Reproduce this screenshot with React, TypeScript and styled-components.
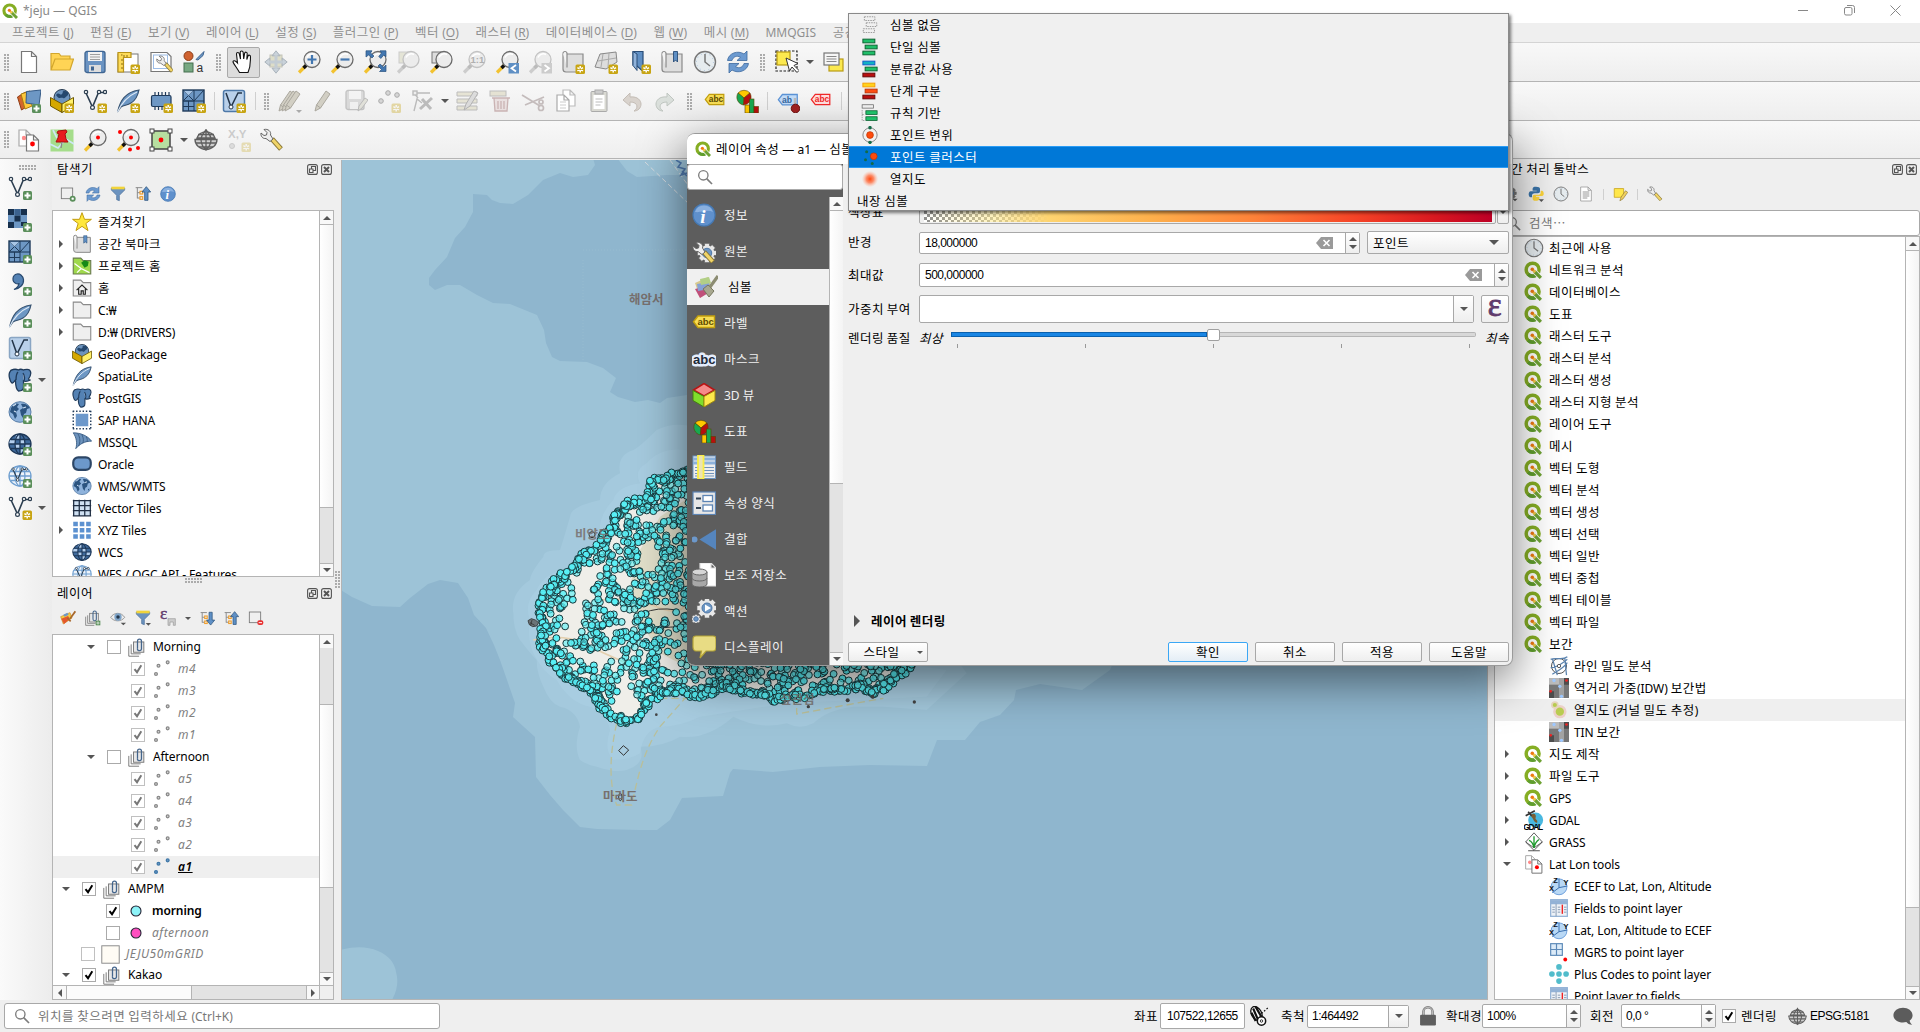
import React from 'react';
import styled, { createGlobalStyle, css } from 'styled-components';

const Global = createGlobalStyle`
  html, body { margin: 0; padding: 0; overflow: hidden; background: #efefef; }
  * { box-sizing: border-box; }
  svg { display: block; flex: none; }
`;

/* ---------- text ---------- */
const Run = styled.span`white-space: pre;`;
const Ko = styled.span`
  font-family: "Noto Sans CJK KR", sans-serif;
  font-size: 1.042em;
  letter-spacing: 0.5px;
`;
const Txt = ({ t }: { t: string }) => (
  <Run>
    {t.split(/([가-힣…]+)/).map((p, i) => (/[가-힣…]/.test(p) ? <Ko key={i}>{p}</Ko> : p))}
  </Run>
);

/* ---------- icons ---------- */
const B = '#6d97c4';
const D = '#1f3a5a';
type IP = { s?: number };
const I = ({ s = 24, children }: { s?: number; children: React.ReactNode }) => (
  <svg width={s} height={s} viewBox="0 0 24 24" fill="none">{children}</svg>
);
const Star = () => (
  <g>
    <rect x="14.5" y="14.5" width="9.5" height="9.5" rx="1.5" fill="#c8a514" />
    <path d="M19.2 16v6.4M16.4 17.6l5.6 3.2M22 17.6l-5.6 3.2" stroke="#fff" strokeWidth="1.5" />
    <circle cx="19.2" cy="19.2" r="1" fill="#c8a514" />
  </g>
);
const Plus = () => (
  <g>
    <rect x="15" y="15" width="9" height="9" rx="1.5" fill="#5b8f5b" />
    <path d="M19.5 16.5v6M16.5 19.5h6" stroke="#fff" strokeWidth="2" />
  </g>
);
const Lens = ({ dim }: { dim?: boolean }) => (
  <g>
    <path d="M9 15.5L2 22.5" stroke={dim ? '#ccc' : '#f2c230'} strokeWidth="3.2" />
    <path d="M9.5 15L6.5 18" stroke={dim ? '#bbb' : '#111'} strokeWidth="3.4" />
    <circle cx="15" cy="9.5" r="8" fill="#ececec" stroke={dim ? '#c2c2c2' : '#6a6a6a'} strokeWidth="1.3" />
    <path d="M10 7.5a5.6 5.6 0 0 1 8-3" stroke="#fff" strokeWidth="1.6" />
  </g>
);
const VShape = () => (
  <g stroke="#2c3e50" strokeWidth="1.2">
    <path d="M3 4L9.5 18 15.5 3.5H22" strokeWidth="1.6" />
    <circle cx="3" cy="3" r="1.7" fill="#fff" /><circle cx="9.5" cy="18.5" r="1.9" fill="#fff" />
    <circle cx="16" cy="3" r="1.7" fill="#fff" /><circle cx="22" cy="3" r="1.6" fill="#fff" />
  </g>
);
const Feather = () => (
  <g>
    <path d="M1.5 23C4 12 9 3 23 1 22 6 20 11 15 14c-4 2.5-7 2-10 4z" fill={B} stroke="#35506e" strokeWidth="1.1" />
    <path d="M1.5 23C6 13 12 7 21 3" stroke="#dce8f5" strokeWidth="1.2" />
  </g>
);
const Mesh = () => (
  <g>
    <rect x="1" y="1" width="21" height="21" fill={B} stroke={D} strokeWidth="1.4" />
    <path d="M1 12h21M12 1v21M12 12L22 1M1 1l11 11L1 12 12 1M1 17.5h11M6.5 12v10" stroke={D} strokeWidth="1" />
    <path d="M2 2l4.5 4.5L11 2z" fill="#a9c6e6" />
  </g>
);
const Box3 = () => (
  <g>
    <circle cx="12" cy="8.5" r="8" fill="#6c93bd" stroke="#24384e" />
    <path d="M6 6c3-4 4 1 6-1s-1-3 3-3 4 4 2 5-2 3-4 2-4 2-7-3z" fill="#24476e" />
    <path d="M.5 8.5L12 15v8.5L.5 17z" fill="#d5a800" stroke="#6d5800" />
    <path d="M23.5 8.5L12 15v8.5L23.5 17z" fill="#fff06a" stroke="#6d5800" />
  </g>
);
const Globe = ({ c = '#4b7bb0', dark = false }: { c?: string; dark?: boolean }) => (
  <g stroke={dark ? '#1e3858' : c} strokeWidth="1.3">
    <ellipse cx="12" cy="12" rx="11" ry="10" fill={dark ? '#3f6a9c' : '#edf3fa'} />
    {dark && <path d="M2 8h5v4H1zM12 8h5v4h-5zM7 12h5v4H7zM17 12h5l-1 4h-4zM8 3h4v5H7zM12 16h5l-2 5h-3z" fill="#b4cfee" stroke="none" />}
    <ellipse cx="12" cy="12" rx="5" ry="10" /><path d="M1 12h22M2.5 7.5h19M2.5 16.5h19M12 2v20" />
  </g>
);
const Earth = () => (
  <g>
    <ellipse cx="12" cy="12" rx="11" ry="10.3" fill="#8fb3dc" stroke="#5a7fa8" />
    <path d="M3 8c3-5 6-5 8-4l-2 3 2 2-3 3 1 4-2 3-2-5-3-2zM13 4c4-1 7 1 9 4l-3 1-1 4-2 1-1 4-2-3-1-5 3-2zM19 16l2-1-1 3z" fill="#2c5480" />
    <path d="M5 6l3-2M15 8l3-1M6 11l2 1" stroke="#cfe0f2" strokeWidth="1.2" />
  </g>
);
const Eleph = () => (
  <path d="M5 1.5C1.5 2 .5 6 1.5 10c1 4 2 5 3 5s2-2 3-3c0 4 0 9 3 11 3 0 5-1 5-4v-6c3 1 5 0 7-1-1 0-2 0-2-1 2-3 3-7 1-9-2-1.500-4-.5-6 0-2-1-4-.8-5 0C9 1.300 7 1 5 1.500zM10 4c-2 2-2 5-2 8M15 5c2 3 2 5 1 8" fill="#5482b4" stroke="#1f3a5a" strokeWidth="1.3" />
);
const Gear = ({ x, y, r, c = '#e8e8e8', o = '#6a6a6a' }: { x: number; y: number; r: number; c?: string; o?: string }) => (
  <g>
    {[0, 45, 90, 135].map(a => <rect key={a} x={x - r} y={y - r * 0.24} width={r * 2} height={r * 0.48} fill={c} stroke={o} strokeWidth=".6" transform={`rotate(${a} ${x} ${y})`} />)}
    <circle cx={x} cy={y} r={r * 0.78} fill={c} />
    <circle cx={x} cy={y} r={r * 0.5} fill={B} stroke="#4d76a6" />
  </g>
);
const WrenchG = () => (
  <g>
    <path d="M12 11l9 10" stroke="#8a7838" strokeWidth="5" /><path d="M12.500 11.500l8 9" stroke="#f0d468" strokeWidth="3.200" />
    <path d="M4 1.500l3 3-.5 2.500-2.500.5-3-2.500C.5 8 2.500 11 6 10.500l4 3 3-2.500-2.500-4C11.500 3.500 8 .5 4 1.500z" fill="#eee" stroke="#666" />
  </g>
);
const Arrows = ({ c, o }: { c: string; o: string }) => (
  <path d="M12 .8l4 4.700h-2.600V9h4V6.500l5 5.500-5 5.500V15h-4v3.500H16l-4 4.700-4-4.700h2.600V15h-4v2.500L1.600 12l5-5.500V9h4V5.500H8z" fill={c} stroke={o} />
);
const Refresh = () => (
  <g fill="#6c9ad0" stroke="#3d6a9e" strokeWidth=".8">
    <path d="M1.500 10.500C2.500 3 12 0 18 4l3-3v9.500h-10l3.500-3.200C10.500 5 7 7 6 10.500z" />
    <path d="M22.500 13.500c-1 7.500-10.500 10.500-16.500 6.500l-3 3v-9.500h10l-3.500 3.200c4 2.300 7.500.300 8.500-3.200z" />
  </g>
);
const Clock = () => (
  <g>
    <circle cx="12" cy="12" r="10.500" fill="#e6ecef" stroke="#777" strokeWidth="1.400" />
    <path d="M12 4v8l5 4" stroke="#777" strokeWidth="1.500" />
    <circle cx="12" cy="12" r="8.500" stroke="#a9bfd8" strokeWidth="1" strokeDasharray="1 3.450" />
  </g>
);
const Book = () => (
  <g>
    <path d="M2 3.500V19a3 3 0 0 0 3 3h17V4H5" fill="#dedede" stroke="#8a8a8a" strokeWidth="1.200" />
    <path d="M2 3.500a2 2 0 0 1 4 0v14" fill="#f4f4f4" stroke="#8a8a8a" strokeWidth="1.200" />
  </g>
);
const Abc = ({ bg, bd, tx, t = 'abc' }: { bg: string; bd: string; tx: string; t?: string }) => (
  <g>
    <path d="M6 5H22.500v11.500H6L1.500 10.750z" fill={bg} stroke={bd} strokeWidth="1.400" />
    <text x="5.500" y="14" fontSize="9.500" fontWeight="700" fill={tx} fontFamily="Liberation Sans">{t}</text>
  </g>
);
const Diagram = () => (
  <g stroke="#5b4300" strokeWidth=".6">
    <path d="M9 9L3 4a8 8 0 0 1 12 0z" fill="#ffc800" /><path d="M9 9L3 4a8 8 0 0 0 5.500 12z" fill="#18a851" /><path d="M9 9l6-5a8 8 0 0 1-6.500 12z" fill="#b80f0f" />
    <rect x="10" y="16" width="4.500" height="8" fill="#ffc800" /><rect x="14.500" y="10" width="4.500" height="14" fill="#18a851" /><rect x="19" y="17.500" width="4.500" height="6.500" fill="#b80f0f" />
  </g>
);
const Pencil = ({ x = 0 }: { x?: number }) => (
  <path d={`M${4 + x} 22l1.500-6L${15 + x} 2l4 3L${9.500 + x} 19zM${5.500 + x} 16l4 3`} fill="#d2cfc4" stroke="#aba89f" />
);
const Stack2 = () => (
  <g stroke="#777" strokeWidth="1.200">
    <path d="M1 10v13h13M4 8v12h12" /><rect x="7" y="5" width="13" height="13" fill="#e8e8e8" />
    <path d="M12 13V4a2 2 0 0 1 5 0v10a2.500 2.500 0 0 1-5-1" stroke="#44658c" strokeWidth="1.600" />
  </g>
);
const Tree = ({ up }: { up?: boolean }) => (
  <g>
    <path d="M1 2.500h10M3.500 2.500v16M3.500 10h4M3.500 18h4" stroke="#8a8a8a" strokeWidth="1.500" />
    <rect x="7.500" y="8" width="4" height="4" stroke="#f0a030" strokeWidth="1.800" /><rect x="7.500" y="16" width="4" height="4" stroke="#f0a030" strokeWidth="1.800" />
    <path d={up ? 'M17 1l6.500 8h-4v12.500h-5V9h-4z' : 'M17 22.500l6.500-8h-4V2h-5v12.500h-4z'} fill="#5f90c6" stroke="#2f567f" strokeWidth="1.200" />
  </g>
);
const Folder = ({ c = '#efefef', o = '#8a8a8a' }: { c?: string; o?: string }) => (
  <path d="M1.500 21.500v-19h9l3 3h9v16z" fill={c} stroke={o} strokeWidth="1.300" />
);
const Page = ({ x = 0, y = 0, w = 14, h = 19, o = '#777' }: { x?: number; y?: number; w?: number; h?: number; o?: string }) => (
  <path d={`M${x} ${y}h${w - 5}l5 5v${h - 5}H${x}zM${x + w - 5} ${y}v5h5`} fill="#fff" stroke={o} strokeWidth="1.200" />
);
const Bars = ({ c, o }: { c: string[]; o: string[] }) => (
  <g strokeWidth="1.200">
    <rect x="2.500" y="1.500" width="16" height="5" fill={c[0]} stroke={o[0]} /><rect x="5.500" y="9.500" width="16" height="5" fill={c[1]} stroke={o[1]} /><rect x="2.500" y="17.500" width="16" height="5" fill={c[2]} stroke={o[2]} />
  </g>
);

const ic: Record<string, React.ReactNode> = {
  q: <g>
    <circle cx="11.500" cy="11.500" r="8.600" stroke="#86ae24" strokeWidth="4.600" />
    <path d="M5.500 17.600a8.600 8.600 0 0 0 10 1.600" stroke="#5f9e2e" strokeWidth="4.600" />
    <path d="M12 12l10.500 10.500" stroke="#fff" strokeWidth="6.500" /><path d="M14 14l8.500 8.500" stroke="#6ea233" strokeWidth="4.400" />
    <path d="M10.500 10.500l4.500 4.500" stroke="#f3c64a" strokeWidth="3.600" /><circle cx="11" cy="11" r="2.300" fill="#ee7913" />
  </g>,
  new: <Page x={4.500} y={1.500} w={15} h={21} />,
  open: <path d="M1 20V3.500h8l2 2.500h9v3h3.500L20 20z M1 20L5 9h15" fill="#ffd455" stroke="#d2a62d" strokeWidth="1.200" />,
  save: <g><rect x="2" y="1.500" width="20" height="21" rx="2" fill="#6a93c2" stroke="#3f6591" strokeWidth="1.300" /><rect x="5" y="2" width="14" height="9" fill="#f2f2f2" /><path d="M7 4.500h10M7 7h10M7 9.500h10" stroke="#888" strokeWidth=".8" /><rect x="6" y="15" width="12" height="7" fill="#ddd" /><rect x="8" y="16.500" width="3" height="4" fill="#3f6591" /></g>,
  layout: <g><rect x="2" y="4" width="20" height="18" fill="#fff" stroke="#777" /><path d="M2 2.500h13v5H7.500V22H2z" fill="#fddb5a" stroke="#b99318" strokeWidth="1.200" /><path d="M5 5h1.500M8 5v2M11 5v2M5 10h2M5 14h2M5 18h2" stroke="#8b6c10" /><Star /></g>,
  layman: <g><path d="M2 2.500h16l4 4v15H2z" fill="#fff" stroke="#777" strokeWidth="1.200" /><rect x="4.500" y="5" width="14" height="13.500" stroke="#9cbce6" /><g transform="translate(7 5) scale(.78)"><WrenchG /></g></g>,
  style: <g><circle cx="6.500" cy="6" r="4.500" fill="#cf6230" stroke="#8d3d18" /><path d="M14 9.500L22 1.500l-1 4-5 4.500z" fill={B} stroke="#3f6591" /><rect x="2" y="13" width="9" height="9" fill="#77a882" stroke="#456f4f" /><text x="14.500" y="22" fontSize="12" fill="#333" fontFamily="Liberation Sans">a</text></g>,
  hand: <path d="M8.500 22.500C6 18 3 14.500 2 12c0-2 2.500-1.500 4.500 1L5.500 4c0-2 2.500-2 2.800 0L9.500 9l-.3-6.500c0-2 2.800-2 3 0l.5 6.500.9-5.700c.4-1.700 2.800-1.400 2.600.4L15.800 9.500l1.200-3.500c.7-1.500 2.700-.8 2.500 1-.3 4 .5 9-2.500 15.500z" fill="#fff" stroke="#111" strokeWidth="1.100" />,
  pan: <g><rect x="6" y="5" width="12" height="12" fill="#ddddc8" stroke="#c4c4b8" /><path d="M12 .8l4 5H8zM12 23.200l4-5H8zM.8 12l5-4v8zM23.200 12l-5-4v8z" fill="#c9d2da" stroke="#aab3bb" /><path d="M12 5v14M5 12h14" stroke="#c3ccd3" strokeWidth="3" /></g>,
  zin: <g><Lens /><path d="M15 5v9M10.500 9.500h9" stroke="#4377b0" strokeWidth="2.200" /></g>,
  zout: <g><Lens /><path d="M10.500 9.500h9" stroke="#4377b0" strokeWidth="2.200" /></g>,
  zfull: <g><Lens /><path d="M3 .8h6L7.500 3l3.500 3-2 2-3.500-3L3 7zM23 .8v6L20.800 5l-3 3.500-2-2L18.500 3 17 .8zM23 21.500h-6.500l2-2-3.500-3.500 2-2 3.800 3.300L23 15z" fill="#4377b0" stroke="#28517f" strokeWidth=".7" /></g>,
  zsel: <g><rect x="3" y="2" width="12" height="11" fill="#e4e4d6" stroke="#ccc" /><Lens dim /></g>,
  zlay: <g><rect x="3" y="2" width="12" height="11" fill="#ddd" stroke="#777" /><Lens /></g>,
  z11: <g><Lens dim /><text x="8.500" y="13" fontSize="9.500" fontWeight="700" fill="#b0b0b0" fontFamily="Liberation Sans">1:1</text></g>,
  zlast: <g><Lens /><rect x="13.500" y="13" width="10.500" height="10.500" fill="#5f8fc4" /><path d="M21 15l-4.500 3.200L21 21.500" stroke="#fff" strokeWidth="1.800" /></g>,
  znext: <g><Lens dim /><rect x="13.500" y="13" width="10.500" height="10.500" fill="#ccc" /><path d="M16.500 15l4.500 3.200-4.500 3.300" stroke="#fff" strokeWidth="1.800" /></g>,
  newmap: <g><Book /><Star /></g>,
  new3d: <g><path d="M1 17L6 4l16-2 1 10-11 7z" fill="#ddd" stroke="#888" /><path d="M4 11l18-3M9 4l-2 13M15 3l-1 14" stroke="#aaa" /><Star /></g>,
  bm: <g><path d="M6 1.500h10v20L10 16l-4-1z" fill="#5f8fc4" stroke="#294d77" strokeWidth="1.200" /><path d="M6 1.500v14l4 5V4z" fill="#8fb2da" stroke="#294d77" /><Star /></g>,
  bms: <g><Book /><path d="M13.500 1.500h4V12l-2-2-2 2z" fill="#5f8fc4" stroke="#294d77" strokeWidth=".9" /></g>,
  clock: <Clock />,
  refresh: <Refresh />,
  select: <g><rect x="1" y="1" width="21" height="20" stroke="#222" strokeWidth="1.200" strokeDasharray="2.500 1.500" /><rect x="2" y="2" width="13" height="13" fill="#fce94f" stroke="#b89b14" strokeWidth="1.200" /><path d="M11 8l3.500 13 2.500-4 5 5.500 2-2-5-5 4-2z" fill="#fff" stroke="#333" /></g>,
  form: <g><rect x="8" y="9" width="14" height="12" fill="#fce94f" stroke="#b89b14" strokeWidth="1.200" /><rect x="3" y="3" width="15" height="12" fill="#f6f6f6" stroke="#777" strokeWidth="1.200" /><path d="M5.500 6.500h10M5.500 9h10M5.500 11.500h10" stroke="#888" /></g>,
  dsm: <g><path d="M.5 8l8-5 4 13-8 5z" fill="#d4652c" stroke="#8d3d18" /><path d="M4 5l9-3 2 15-7 3z" fill="#fdc83c" stroke="#a87c10" /><path d="M9.500 2.500L24 1l-2 15-13-2z" fill="#6d97c4" stroke="#355a86" /><Plus /></g>,
  gpkg: <g><Box3 /><Star /></g>, box: <Box3 />,
  shp: <g><VShape /><Star /></g>, vadd: <g><VShape /><Plus /></g>,
  spl: <g><Feather /><Star /></g>, spadd: <g><Feather /><Plus /></g>, feather: <Feather />,
  chip: <g><path d="M6 3v18M9.500 3v18M13 3v18M16.500 3v18M20 3v18" stroke={D} strokeWidth="1.200" /><rect x="2.500" y="6.500" width="19.500" height="11" rx="1.500" fill={B} stroke={D} strokeWidth="1.200" /><Star /></g>,
  mesh: <g><Mesh /><Star /></g>, meshadd: <g><Mesh /><Plus /></g>,
  virt: <g><rect x="1.500" y="1.500" width="21" height="21" rx="2" fill="#b9d0ea" stroke="#4d78a8" strokeWidth="1.500" /><path d="M4 4l5 14L16 4h4" stroke="#24364a" strokeWidth="1.500" /><circle cx="9" cy="18" r="2" fill="#fff" stroke="#24364a" /><Star /></g>,
  virtadd: <g><rect x="1.500" y="1.500" width="21" height="21" rx="2" fill="#b9d0ea" stroke="#8aa6c4" strokeWidth="1.500" /><path d="M4 4l5 14L16 4h4" stroke="#24364a" strokeWidth="1.500" /><circle cx="9" cy="18" r="2" fill="#fff" stroke="#24364a" /><Plus /></g>,
  pens: <g><Pencil x={-3} /><Pencil x={0} /><Pencil x={3} /><path d="M18 21h6l-3 3z" fill="#aaa" /></g>,
  pen: <Pencil />,
  saved: <g opacity=".45"><rect x="2" y="1.500" width="18" height="19" rx="2" fill="#bbb" stroke="#888" strokeWidth="1.300" /><rect x="5" y="2" width="12" height="8" fill="#f2f2f2" /><rect x="6" y="13" width="8" height="7" fill="#eee" /><path d="M14 22l1-5 6-8 3 2-6 8z" fill="#ccb" stroke="#777" /></g>,
  addpt: <g><g fill="#d6d6d6" stroke="#aaa"><circle cx="4" cy="12" r="2.300" /><circle cx="11" cy="4" r="2.300" /><circle cx="20" cy="6" r="2.300" /></g><g opacity=".35"><Star /></g></g>,
  vertex: <g stroke="#bbb" strokeWidth="1.400"><path d="M4 4h16M4 4l4 5M4 22L7 10l5 4" /><rect x="3" y="2" width="4" height="4" fill="#eee" /><path d="M10 20L22 9M12 10l9 10" strokeWidth="3" /></g>,
  multi: <g opacity=".6"><path d="M2 3h20v4H2zM2 10h20v4H2zM2 17h20v4H2z" fill="#ddd9c0" stroke="#999" /><path d="M9 21l2-6L19 2l4 2-8 13z" fill="#ccc" stroke="#888" /></g>,
  trash: <g opacity=".6"><rect x="2" y="2" width="16" height="5" fill="#dbd7bd" stroke="#999" /><path d="M4 9h18M6 9l1 13h12l1-13M10 12v8M13 12v8M16 12v8" fill="#e4d4d4" stroke="#b08a8a" strokeWidth="1.300" /></g>,
  cut: <g stroke="#c4bcbc" strokeWidth="1.700"><path d="M1 6l18 11M4 16L23 8" /><circle cx="20" cy="19" r="2.500" /><circle cx="20" cy="13" r="2" /></g>,
  copy: <g><Page x={9} y={1} w={12} h={16} o="#bbb" /><Page x={3} y={6} w={12} h={16} o="#aaa" /><path d="M6 13h6M6 16h6M6 19h6" stroke="#ccc" /></g>,
  paste: <g><rect x="4" y="2.500" width="16" height="20" rx="1" fill="#d9d9d2" stroke="#aaa" /><rect x="6.500" y="6" width="11" height="14" fill="#fff" /><rect x="8" y="1" width="8" height="4" fill="#ccc" stroke="#aaa" /><path d="M8.500 10h7M8.500 13h7M8.500 16h5" stroke="#bbb" /></g>,
  undo: <path d="M3 11l7-7v4c8-1 11 4 11 7 0 4-3 7-7 7 4-2 5-9-4-9v4z" fill="#d9d3cd" stroke="#c4bdb6" />,
  redo: <path d="M21 11l-7-7v4C6 7 3 12 3 15c0 4 3 7 7 7-4-2-5-9 4-9v4z" fill="#dbe0dc" stroke="#c0c6c1" />,
  lab: <Abc bg="#f7dd55" bd="#c29f0e" tx="#5d4b00" />,
  labt: <g transform="translate(2 1) scale(.88)"><Abc bg="#f7dd55" bd="#c29f0e" tx="#5d4b00" /></g>,
  diag: <Diagram />,
  labpin: <g><g transform="translate(1 1) scale(.9)"><Abc bg="#c2dcf8" bd="#5b93d6" tx="#35679e" t="ab" /></g><path d="M19 9v7" stroke="#bbb" strokeWidth="2.500" /><circle cx="19.500" cy="19.500" r="4.300" fill="#a02020" stroke="#6d1010" /></g>,
  labred: <g transform="translate(1 1) scale(.88)"><Abc bg="#ffdede" bd="#f02828" tx="#f02828" /></g>,
  ll: <g><Page x={2} y={2} w={12} h={16} o="#aaa" /><circle cx="7" cy="10" r="2.200" fill="#ff8a8a" /><Page x={9.500} y={7} w={12} h={16} /><circle cx="15.500" cy="16" r="2.400" fill="#f00" /></g>,
  pin: <g><rect x="0.500" y="1.500" width="23" height="22" fill="#a5dd8b" /><path d="M0 16l8 4 8-9 8 5M3 2l4 8" stroke="#cfe8f5" strokeWidth="1.700" /><path d="M8 3l8-1 1 2-2 2 1 5 2 3H6l2-4 1-4-2-1z" fill="#e81d1d" stroke="#a80e0e" /><path d="M12 14l-1 6" stroke="#888" strokeWidth="1.400" /></g>,
  zpt: <g><Lens /><circle cx="15" cy="9.500" r="2" fill="#f00" /></g>,
  zpts: <g><Lens /><circle cx="15" cy="9.500" r="2" fill="#f00" /><circle cx="4" cy="4" r="2" fill="#f00" /><circle cx="14" cy="21.500" r="2" fill="#f00" /><circle cx="22" cy="20" r="2" fill="#f00" /></g>,
  ext: <g><rect x="3" y="3" width="18" height="18" fill="#b7dfa0" stroke="#444" strokeWidth="1.500" /><g fill="#fff" stroke="#444"><rect x="1" y="1" width="4" height="4" /><rect x="19" y="1" width="4" height="4" /><rect x="1" y="19" width="4" height="4" /><rect x="19" y="19" width="4" height="4" /></g><circle cx="12" cy="12" r="2.400" fill="#f00" /></g>,
  ggrey: <g stroke="#5f5f5f" strokeWidth="1.300"><path d="M1 11.500a11 10 0 0 0 22 0zM3 10a9.500 9 0 0 1 18 0z" fill="#cfcfcf" /><path d="M12 1v21M2 15h20M5 19h14M4 6.500h16M12 2c-7 7-6 14 0 20 6-6 7-13 0-20" /></g>,
  xy: <g opacity=".55"><text x="1" y="9.500" fontSize="11.500" fontWeight="700" fill="#aaa" fontFamily="Liberation Sans">X,Y</text><circle cx="5" cy="18" r="2.500" fill="#ccc" stroke="#aaa" /><g opacity=".5"><Star /></g></g>,
  wrench: <WrenchG />,
  raster: <g><rect x="0" y="1" width="19" height="19" fill={B} /><path d="M0 1h6v6H0zM13 1h6v6h-6zM6.500 7.500h6v6h-6zM0 14h6v6H0zM13 14h6v4h-6z" fill="#17304d" /><path d="M6.500 1h6v6h-6z" fill="#3b628f" /><Plus /></g>,
  comma: <g><path d="M9 2a5 5 0 0 0-1 9.500c2 .7 3 0 3-.5 0 3-2 5-5 6.500 6-1 10-5 9.500-10C15 4 12 1.500 9 2z" fill="#5482b4" stroke="#27486e" strokeWidth="1.200" /><Plus /></g>,
  pgadd: <g><Eleph /><Plus /></g>, pg: <Eleph />,
  wms: <g><Earth /><Plus /></g>, earth: <Earth />,
  wcs: <g><Globe dark /><Plus /></g>, wcs0: <Globe dark />,
  wfs: <g><Globe c="#6f9fd0" /><g transform="translate(3 3) scale(.7)"><VShape /></g><Plus /></g>,
  wfs0: <g><Globe c="#6f9fd0" /><g transform="translate(3 3) scale(.75)"><VShape /></g></g>,
  addrect: <g><rect x="2" y="3" width="17" height="16" stroke="#777" strokeWidth="1.300" /><circle cx="19" cy="19" r="4.500" fill="#5b8f5b" /><circle cx="19" cy="19" r="1.800" fill="#fff" /></g>,
  remrect: <g><rect x="2" y="3" width="17" height="16" stroke="#777" strokeWidth="1.300" /><rect x="14" y="15.500" width="9" height="7" rx="3" fill="#e83030" /><path d="M16 19h5" stroke="#fff" strokeWidth="1.500" /></g>,
  filter: <g><path d="M2 3h20v3l-8 8v8l-4-1.500V14L2 6z" fill="#6c93bf" stroke="#456a95" /><path d="M2 3h20" stroke="#f2d43a" strokeWidth="4" /></g>,
  up: <Tree up />, down: <Tree />,
  info: <g><circle cx="12" cy="12" r="11" fill="#5f90cc" stroke="#4579b4" strokeWidth="1.200" /><path d="M3 9a9.500 9.500 0 0 1 18 0c-6-3-12 1-18 0z" fill="#8ab0df" /><text x="8.300" y="19.500" fontSize="19" fontStyle="italic" fontWeight="700" fill="#fff" fontFamily="Liberation Serif">i</text></g>,
  star: <path d="M12 .8l3 8h8.300l-6.700 5 2.600 8.500L12 17.200l-7.200 5.100 2.600-8.500-6.700-5H9z" fill="#ffe83c" stroke="#c29c10" strokeWidth="1.200" />,
  sbm: <g><Book /><path d="M14 2h4v9l-2-1.500L14 11z" fill="#5f8fc4" stroke="#294d77" strokeWidth=".6" /></g>,
  phome: <g><Folder c="#9fd94c" o="#6a7a50" /><path d="M3 9l8 6 10 5M6 20l5-5" stroke="#fff" strokeWidth="1.500" /><path d="M11 8l4-3 5 2-1 5-4 2z" fill="#178a17" /></g>,
  home: <g><Folder /><path d="M5.500 14.500L12 8.500l6.500 6M8 13v6.500h3v-4h2.500v4H16V13" stroke="#222" strokeWidth="1.400" /></g>,
  folder: <Folder />,
  hana: <g><rect x="4.500" y="4.500" width="15" height="15" fill="#6c98cb" /><path d="M1 1.500h22M1 22.500h22M1.500 1v22M22.500 1v22" stroke={D} strokeWidth="1.700" strokeDasharray="1.700 2.200" /></g>,
  mssql: <g><path d="M1.500 1c8 0 17 3 22 10-8 0-14 3-19 9 2-6 1-13-3-19z" fill="#6d93bd" stroke="#345880" /><path d="M7 2c3 5 3 10 1 15M12 3.500c2 4 2 7 1 10M17 6c1.500 2 1.500 4 1 6" stroke="#345880" /></g>,
  oracle: <rect x="1.500" y="4" width="21" height="15" rx="6" fill="#6c98cb" stroke="#2c4666" strokeWidth="2.600" />,
  vt: <g><rect x="2" y="2.500" width="20" height="19" fill="#cfe0f2" /><path d="M2 2v20M8.700 2v20M15.300 2v20M22 2v20M1 3h22M1 9h22M1 15h22M1 21.500h22" stroke="#1f2d42" strokeWidth="1.500" /></g>,
  xyz: <path d="M1.500 2h5.500v5.500H1.500zM9.300 2h5.500v5.500H9.300zM17 2h5.500v5.500H17zM1.500 9.500h5.500V15H1.500zM9.300 9.500h5.500V15H9.300zM17 9.500h5.500V15H17zM1.500 17h5.500v5.500H1.500zM9.300 17h5.500v5.500H9.300zM17 17h5.500v5.500H17z" fill="#5c91d0" />,
  lsty: <g><path d="M1 10l14-6 3 8-13 9z" fill="#f5cd42" stroke="#c98a2a" /><path d="M2 13l10-4 3 4-9 8z" fill="#e4572c" /><path d="M5 7l6-3 2 3-6 3z" fill="#6d97c4" /><path d="M11 12l5 5M15 13L23 2" stroke="#a8682c" strokeWidth="2.600" /></g>,
  grp: <Stack2 />,
  grpadd: <g><Stack2 /><rect x="16" y="16" width="7" height="7" fill="#5b8f5b" /><path d="M19.500 17v5M17 19.500h5" stroke="#fff" /></g>,
  eye: <g><path d="M1 11c5-8 16-8 21 0-5 7-16 7-21 0z" fill="#eee" stroke="#999" strokeWidth="1.500" /><circle cx="12" cy="10.500" r="5.500" fill="#7da3c8" /><circle cx="12" cy="10.500" r="2.600" fill="#24364a" /><path d="M16 19h8l-4 4z" fill="#555" /></g>,
  filt2: <g><path d="M2 3h20v3l-8 8v8l-4-1.500V14L2 6z" fill="#6c93bf" stroke="#456a95" /><path d="M2 3h20" stroke="#f2d43a" strokeWidth="4" /><path d="M16 19.500h8l-4 4z" fill="#555" /></g>,
  eps: <g><text x="0" y="14" fontSize="26" fontWeight="400" fill="#5f3a6c" stroke="#5f3a6c" strokeWidth=".6" fontFamily="Liberation Serif">ε</text><path d="M12 13h11v10h-3v-5h-5v5h-3z" fill="#ccc" stroke="#999" /></g>,
  eps1: <text x="4" y="20" fontSize="36" fontWeight="400" fill="#5f3a6c" stroke="#5f3a6c" strokeWidth=".9" fontFamily="Liberation Serif">ε</text>,
  py: <g><path d="M12 1C6 1 7 4 7 7h6v1H4c-4 0-4 9 0 9h2v-3c0-2 2-3 4-3h5c2 0 3-1 3-3V4c0-2-2-3-6-3z" fill="#3b74a8" /><path d="M12 22c6 0 5-3 5-6h-5v-1h9c4 0 3-8 0-8h-2v3c0 2-2 3-4 3h-5c-2 0-3 1-3 3v3c0 2 1 3 5 3z" fill="#fcd43c" /><path d="M16 20h8l-4 4z" fill="#555" /></g>,
  gear: <g><Gear x={11} y={11} r={9} c="#777" /><path d="M14 19h8l-4 4z" fill="#555" /></g>,
  doc: <g><Page x={4} y={1.500} w={16} h={21} o="#999" /><path d="M7 9h10M7 12h10M7 15h10M7 18h7" stroke="#888" strokeWidth="1.300" /></g>,
  note: <g><path d="M2 2.500h15v13l-6 1H2z" fill="#ffe74a" stroke="#c9a520" strokeWidth="1.300" /><path d="M11 22l2-6 7-10 3.500 2.500L16 19z" fill="#f0d060" stroke="#8a7430" /></g>,
  lined: <g><circle cx="12" cy="12" r="9" stroke="#555" strokeWidth="1.200" /><path d="M2 4c6-3 14 2 20-3M2 14c7 0 12-4 20-10M4 22c6-4 12-6 18-14M4 3l6 20M19 3l2 20" stroke="#5b84b0" strokeWidth="1.500" /><circle cx="12" cy="12" r="2" fill="#fff" stroke="#444" /></g>,
  idw: <g><rect width="24" height="24" fill="#777" /><path d="M12 0h6v24h-6z" fill="#a2a2a2" /><path d="M0 0h12v8H0z" fill="#bbb" /><path d="M18 0h6v8h-6zM0 16h6v8H0z" fill="#4d4d4d" /><circle cx="6" cy="3" r="2" fill="#9ec8ff" /><circle cx="13" cy="10" r="2" fill="#9ec8ff" /><circle cx="15" cy="22" r="2" fill="#9ec8ff" /><circle cx="21" cy="3" r="1.600" fill="#e22" /><circle cx="2" cy="16" r="1.600" fill="#e22" /></g>,
  kde: <g><circle cx="13" cy="14" r="8" fill="#ecd0c8" /><circle cx="13" cy="14" r="5" fill="#b9cc50" /><circle cx="7" cy="6" r="4.500" fill="#e6d6bc" /><circle cx="7" cy="6" r="2.500" fill="#b9cc50" /></g>,
  gdal: <g><circle cx="14" cy="12" r="9" fill="#49b8e0" /><path d="M9 5c4-2 6 1 5 4s2 2 2 5-4 0-5-3-4-3-2-6z" fill="#7a5f34" /><path d="M2 7L13 1M5 2l4 5" stroke="#333" strokeWidth="2" /><text x="-1" y="23.500" fontSize="10" fontWeight="700" fill="#000" textLength="24" fontFamily="Liberation Sans">GDAL</text></g>,
  grass: <g><path d="M12 1l10 11-10 10L2 12z" fill="#fff" stroke="#444" /><path d="M2 12l10 7 10-7" stroke="#444" /><path d="M12 19c-1-5-3-8-6-9M12 19c0-6 0-9 0-14M12 19c1-5 3-8 6-10" stroke="#1f9a2e" strokeWidth="1.600" /><path d="M5 22.500h14" stroke="#333" /></g>,
  ecef: <g><circle cx="12" cy="13" r="9.500" fill="#b9d8f5" stroke="#5b93d6" /><path d="M12 3v11l10-2M12 14l-8 6" stroke="#3b70b0" strokeWidth="1.200" /><text x="5" y="8" fontSize="9" fontWeight="700" fill="#111" fontFamily="Liberation Sans">Z</text><text x="17.500" y="11" fontSize="9" fontWeight="700" fill="#111" fontFamily="Liberation Sans">Y</text><text x="0" y="18" fontSize="9" fontWeight="700" fill="#111" fontFamily="Liberation Sans">X</text></g>,
  ftp: <g><rect x="2" y="2" width="20" height="20" fill="#eef2f7" stroke="#93b2d6" strokeWidth="1.500" /><path d="M2 5h20" stroke="#93b2d6" strokeWidth="5" /><path d="M8.500 7v15M4 11h3M4 14h3M4 17h3M10.500 11h3M10.500 14h3M10.500 17h3M18 11h3M18 14h3M18 17h3" stroke="#8a9db5" strokeWidth="1.200" /><path d="M16 8v11" stroke="#e22" strokeWidth="1.700" /></g>,
  mgrs: <g><rect x="2" y="2" width="14" height="14" fill="#dcebf8" stroke="#5c89b8" strokeWidth="1.400" /><path d="M9 2v14M2 9h14" stroke="#5c89b8" strokeWidth="1.400" /><circle cx="19.500" cy="21" r="2.300" fill="#f00" /></g>,
  pluscode: <g fill="#51bccb"><circle cx="12" cy="3.500" r="3.400" /><circle cx="3.500" cy="12" r="3.400" /><circle cx="12" cy="12" r="3.400" /><circle cx="20.500" cy="12" r="3.400" /><circle cx="12" cy="20.500" r="3.400" /></g>,
  src: <g><Gear x={15} y={14} r={9.500} /><g transform="translate(0 2)"><WrenchG /></g></g>,
  sym: <g><path d="M1 8l13-6 4 12-12 9z" fill="#d7c98f" /><path d="M1 14l12-3 3 6-10 6z" fill="#c0507a" /><path d="M3 9l12-2 1 7-12 2z" fill="#86a2d6" /><path d="M6 4l9-2 2 6-10 2z" fill="#b2cf86" /><path d="M9 14l6 8 5-6-6-6z" fill="#a8a890" stroke="#77775f" /><path d="M16 12L24 1" stroke="#8c8c72" strokeWidth="3.200" /></g>,
  mask: <g><text x="1" y="16.500" fontSize="13.500" fontWeight="700" fill="#1d2a3a" stroke="#e4ecfb" strokeWidth="5" strokeLinejoin="round" paintOrder="stroke" textLength="22.500" lengthAdjust="spacingAndGlyphs" fontFamily="Liberation Sans">abc</text></g>,
  cube: <g strokeWidth="1"><path d="M12 .5L22.500 7 12 13 1.500 7z" fill="#f58a8a" stroke="#b81414" strokeWidth="1.500" /><path d="M1 7.500l11 6V24L1 17.500z" fill="#80dd2c" stroke="#44820e" /><path d="M23 7.500l-11 6V24l11-6.500z" fill="#fde84c" stroke="#a28c10" /></g>,
  field: <g><rect x="1" y="1" width="22.500" height="22.500" fill="#eee" stroke="#6c93bf" /><path d="M1 4h22M1 8h22" stroke="#8db2dc" strokeWidth="3" /><path d="M3 12.500h19M3 15.500h19M3 18.500h19M3 21h19" stroke="#7193bb" strokeWidth="1.200" /><rect x="6" y="0" width="5.500" height="24" fill="#ece4b0" stroke="#fbee45" strokeWidth="1.800" /></g>,
  attr: <g><rect x="1" y="1" width="22.500" height="22.500" fill="#e6e6e6" stroke="#5c84b4" strokeWidth="1.200" /><rect x="11" y="4.500" width="9.500" height="6" fill="#fff" stroke="#5c84b4" strokeWidth="1.300" /><rect x="11" y="14" width="9.500" height="6" fill="#fff" stroke="#5c84b4" strokeWidth="1.300" /><path d="M4 7.500h5M4 17h5" stroke="#345" strokeWidth="1.800" /></g>,
  join: <g><circle cx="2.500" cy="12.500" r="3" fill="#6c98cb" /><path d="M7.500 12.500L24.500 2v21z" fill="#5585bd" /></g>,
  aux: <g><Page x={8} y={0} w={16} h={23} o="#ddd" /><g stroke="#666" fill="#a8a8a8"><path d="M0 9v12c0 4 15 4 15 0V9z" /><ellipse cx="7.500" cy="9" rx="7.500" ry="3" fill="#d6d6d6" /><path d="M0 15c0 4 15 4 15 0" /></g></g>,
  act: <g><Gear x={15} y={9} r={10} /><path d="M13 5.500l6 3.500-6 3.500z" fill="#fff" /><Gear x={4} y={20} r={4.500} /></g>,
  disp: <path d="M4 1h17c2 0 3 1 3 3v8c0 2-1 4-3 4h-7l-6 7 1.500-7H4c-2 0-3-2-3-4V4c0-2 1-3 3-3z" fill="#e8dc84" stroke="#b5a537" strokeWidth="1.200" />,
  sNone: <g stroke="#999" strokeWidth="1.300" strokeDasharray="2 1.300"><rect x="4.500" y="1" width="14" height="5" /><rect x="7" y="9" width="14" height="5" /><rect x="3" y="17" width="15" height="5" /></g>,
  sOne: <Bars c={['#1fbf69', '#1fbf69', '#1fbf69']} o={['#075c2c', '#075c2c', '#075c2c']} />,
  sCat: <Bars c={['#10b1c4', '#1fbf69', '#b80f0f']} o={['#1253c9', '#075c2c', '#5d0606']} />,
  sGrad: <Bars c={['#ffd21c', '#ff4d12', '#b80f0f']} o={['#f59b00', '#b83202', '#5d0606']} />,
  sRule: <g><rect x="1.500" y="1" width="15" height="4.500" fill="#eee" stroke="#666" /><path d="M1.500 8v14h3M1.500 14h3" stroke="#888" strokeDasharray="2 1" /><rect x="6.500" y="9" width="15" height="5" fill="#1fbf69" stroke="#075c2c" /><rect x="6.500" y="17" width="15" height="5" fill="#1fbf69" stroke="#075c2c" /></g>,
  sDisp: <g><circle cx="12" cy="12" r="9.500" stroke="#888" strokeWidth="1.300" /><circle cx="12" cy="12" r="4.500" fill="#ff4b0c" stroke="#c23402" /><circle cx="12" cy="2.200" r="2.300" fill="#126b48" /><circle cx="12" cy="21.800" r="2.300" fill="#126b48" /></g>,
  sClus: <g><circle cx="17" cy="11" r="4.500" fill="#ff4b0c" stroke="#c23402" /><circle cx="7.500" cy="5" r="2" fill="#126b48" /><circle cx="6" cy="15.500" r="2" fill="#126b48" /><circle cx="15" cy="20.500" r="2" fill="#126b48" /></g>,
  sHeat: <g><defs><radialGradient id="ht"><stop offset="0" stopColor="#ff4810" /><stop offset=".45" stopColor="#ff7a50" stopOpacity=".85" /><stop offset="1" stopColor="#ffb8a0" stopOpacity="0" /></radialGradient></defs><circle cx="12" cy="12" r="11" fill="url(#ht)" /></g>,
  mag: <g stroke="#7d7d7d" strokeWidth="2"><circle cx="9.500" cy="9.500" r="7" /><path d="M14.500 14.500l8 8" strokeWidth="2.600" /></g>,
  bug: <g stroke="#111"><ellipse cx="9" cy="9" rx="6" ry="9" fill="#fff" strokeWidth="1.600" transform="rotate(-30 9 9)" /><path d="M5 3l6 14M8 1l7 12M3 8l5 10" strokeWidth="2.600" /><circle cx="15" cy="18" r="5" fill="#fff" strokeWidth="1.800" /><circle cx="15" cy="18" r="1.500" /><path d="M15 9l8-7" strokeDasharray="2 2" strokeWidth="1.500" /></g>,
  lock: <g><path d="M6.500 12V7a5.500 5.500 0 0 1 11 0v5" stroke="#7b7b7b" strokeWidth="3" /><path d="M6.500 12V7a5.500 5.500 0 0 1 11 0v5" stroke="#cfcfcf" strokeWidth="1" /><rect x="2.500" y="10.500" width="19" height="13" rx="1.500" fill="#5e5e5e" /></g>,
  bubble: <path d="M12 2c6 0 11.500 3.600 11.500 9 0 3-1.500 5-3.500 6.400.2 2 1.200 3.600 3 5.100-3.400 0-5.600-1.300-7-3.200-1.300.4-2.600.6-4 .6C6 20 .5 16.400.5 11S6 2 12 2z" fill="#5c5c5c" />,
  ptsG: <g fill="#d8d8d8" stroke="#888" strokeWidth="1.500"><circle cx="9" cy="8" r="1.700" /><circle cx="20" cy="4" r="1.700" /><circle cx="6" cy="18" r="1.700" /></g>,
  ptsB: <g fill="#6d97c4" stroke="#3f78a8" strokeWidth="1.500"><circle cx="9" cy="8" r="1.700" /><circle cx="20" cy="4" r="1.700" /><circle cx="6" cy="18" r="1.700" /></g>,
  cy: <circle cx="12" cy="12" r="6" fill="#8df3f8" stroke="#223" strokeWidth="1.300" />,
  mg: <circle cx="12" cy="12" r="6" fill="#ff4fc0" stroke="#223" strokeWidth="1.300" />,
  sq: <rect x="1" y="1" width="22" height="22" fill="#fffcf5" stroke="#888" strokeWidth="1.200" />,
};
const Icon = ({ n, s }: { n: string } & IP) => <I s={s}>{ic[n]}</I>;

/* ---------- shell ---------- */
const Shell = styled.div`
  position: relative; width: 1920px; height: 1032px; overflow: hidden;
  display: flex; flex-direction: column; background: #efefef;
  font: 12px/16px "Noto Sans", "Noto Sans CJK KR", sans-serif; color: #000;
`;
const TitleBar = styled.header`
  height: 23px; flex: none; background: #fff; display: flex; align-items: center; padding: 0 19px 2px 2px; color: #888; gap: 5px;
`;
const WinButtons = styled.div`margin-left: auto; display: flex; gap: 35px;`;
const MenuBar = styled.nav`
  height: 20px; flex: none; display: flex; gap: 16.600px; padding: 0 12px; align-items: center; color: #8f8f8f; border-bottom: 1px solid #d4d4d4; white-space: nowrap;
`;
const Bar = styled.div<{ $h: number }>`
  height: ${p => p.$h}px; flex: none; display: flex; align-items: center;
  background: linear-gradient(#f8f8f8, #eeeeee); border-bottom: 1px solid #b4b4b4;
`;
const Tool = styled.div<{ $on?: boolean }>`
  width: 33px; height: 31px; flex: none; display: flex; align-items: center; justify-content: center;
  ${p => p.$on && css`background: #dcdcdc; border: 1px solid #a9a9a9; border-radius: 2px;`}
`;
const Slot = styled.div<{ $w: number }>`width: ${p => p.$w}px; flex: none; display: flex; align-items: center; justify-content: center;`;
const Dots = styled.i<{ $h?: boolean }>`
  width: ${p => (p.$h ? 17 : 5)}px; height: ${p => (p.$h ? 5 : 17)}px;
  background: radial-gradient(circle at 1px 1px, #aaa 0.700px, transparent 1px) 0 0 / 3px 3px;
`;
const Sep = styled.i`width: 1px; height: 18px; background: #cfcfcf;`;
const Tri = styled.i<{ $d?: 'u' | 'r' | 'l'; $s?: number }>`
  width: 0; height: 0; display: block; flex: none;
  border: ${p => p.$s || 4}px solid transparent;
  ${p => p.$d === 'u' ? css`border-bottom-color: #555; border-top-width: 0;`
    : p.$d === 'r' ? css`border-left-color: #555; border-right-width: 0;`
    : p.$d === 'l' ? css`border-right-color: #555; border-left-width: 0;`
    : css`border-top-color: #555; border-bottom-width: 0;`}
`;

const tb1 = 'g12.5 new open save layout layman style g16 *hand pan zin zout zfull zsel zlay z11 zlast znext newmap new3d bm bms clock refresh g16 select v13 form';
const tb2 = 'g12.5 dsm gpkg shp spl chip mesh s7 virt s9 g14 pens pen saved addpt vertex v12 multi trash cut copy paste undo redo g15.5 labt diag s8 labpin labred s8';
const tb3 = 'g12.5 ll pin zpt zpts ext v12 ggrey xy wrench';
const Toolbar = ({ h, items }: { h: number; items: string }) => (
  <Bar $h={h}>
    {items.split(' ').map((k, i) => {
      const m = /^([gsv])([\d.]+)$/.exec(k);
      if (m) return <Slot key={i} $w={+m[2]}>{m[1] === 'g' ? <Dots /> : m[1] === 's' ? <Sep /> : <Tri />}</Slot>;
      const on = k[0] === '*';
      return <Tool key={i} $on={on}><Icon n={on ? k.slice(1) : k} s={24} /></Tool>;
    })}
  </Bar>
);

const Main = styled.main`height: 841px; flex: none; display: flex;`;
const SideBar = styled.div`
  width: 52px; flex: none; padding: 5px 0 0 8px; background: linear-gradient(90deg, #fafafa, #ececec);
`;
const SideGrip = styled.div`height: 8px; padding: 1px 0 0 11px;`;
const SideTool = styled.div`height: 32px; display: flex; align-items: center; gap: 6px;`;
const Dock = styled.section<{ $w: number }>`width: ${p => p.$w}px; flex: none; display: flex; flex-direction: column;`;
const DockTitle = styled.div<{ $r: number }>`height: 20px; flex: none; display: flex; align-items: center; padding: 0 ${p => p.$r}px 0 5px; gap: 3px;`;
const Grow = styled.div`flex: 1; min-width: 0;`;
const DockBar = styled.div<{ $g: number; $l: number }>`height: 31px; flex: none; display: flex; align-items: center; gap: ${p => p.$g}px; padding: 0 0 1px ${p => p.$l}px;`;
const WBtn = ({ x }: { x?: boolean }) => (
  <svg width="11" height="11" viewBox="0 0 11 11" fill="none" stroke="#555" strokeWidth="1.100">
    <rect x=".6" y=".6" width="9.800" height="9.800" rx="2" />
    {x ? <path d="M3 3l5 5M8 3L3 8" strokeWidth="2" /> : <path d="M2.500 5h3.500v3.500H2.500zM4.500 4.500v-2h4v4h-2" />}
  </svg>
);
const Box = styled.div<{ $h: number }>`height: ${p => p.$h}px; flex: none; display: flex; background: #fff; border: 1px solid #b4b4b4; overflow: hidden;`;
const Rows = styled.div<{ $pt?: number }>`flex: 1; min-width: 0; overflow: hidden; padding-top: ${p => p.$pt || 0}px;`;
const Row = styled.div<{ $h?: number; $l: number; $sel?: boolean }>`
  height: ${p => p.$h || 22}px; display: flex; align-items: center; padding-left: ${p => p.$l}px; white-space: nowrap;
  background: ${p => (p.$sel ? '#efefef' : 'transparent')};
`;
const Cap = styled.span<{ $l: number; $c?: string; $b?: boolean; $i?: boolean; $u?: boolean; $low?: boolean }>`
  margin-left: ${p => p.$l}px; color: ${p => p.$c || '#000'}; padding-top: ${p => (p.$low ? 2 : 0)}px;
  font-weight: ${p => (p.$b ? 600 : 400)}; font-style: ${p => (p.$i ? 'italic' : 'normal')};
  text-decoration: ${p => (p.$u ? 'underline' : 'none')}; letter-spacing: ${p => (p.$i ? 0.500 : -0.100)}px;
`;
const latin = (t: string) => !/[가-힣]/.test(t);
const Scroll = styled.div`width: 14px; flex: none; display: flex; flex-direction: column; border-left: 1px solid #b4b4b4; background: #e3e3e3;`;
const Knob = styled.div`
  flex: none; width: 13px; height: 13px; display: flex; align-items: center; justify-content: center; background: #f8f8f8;
`;
const Thumb = styled.div<{ $h: number }>`flex: none; height: ${p => p.$h}px; background: linear-gradient(90deg, #fff, #f4f4f4); border: solid #b4b4b4; border-width: 1px 0;`;
const Gap = styled.div<{ $h: number }>`flex: none; height: ${p => p.$h}px;`;
const HGap = styled.div<{ $w: number }>`flex: none; width: ${p => p.$w}px;`;
const EndKnob = styled(Knob)`border-top: 1px solid #b4b4b4;`;
const VScroll = ({ a, t }: { a: number; t: number }) => (
  <Scroll><Knob><Tri $d="u" /></Knob><Gap $h={a} /><Thumb $h={t} /><Grow /><EndKnob><Tri /></EndKnob></Scroll>
);
const HScroll = styled.div`height: 14px; display: flex; background: #e3e3e3; border-top: 1px solid #b4b4b4;`;
const HThumb = styled.div`width: 126px; background: #fbfbfb; border: solid #b4b4b4; border-width: 0 1px;`;
const RightKnob = styled(Knob)`border-left: 1px solid #b4b4b4;`;
const Corner = styled.div`height: 14px; flex: none; background: #efefef; border: solid #b4b4b4; border-width: 1px 0 0 1px;`;
const Check = styled.span<{ $dim?: boolean }>`
  width: 14px; height: 14px; flex: none; background: #fff; border: 1px solid ${p => (p.$dim ? '#c0c0c0' : '#aaa')}; display: flex; align-items: center; justify-content: center;
`;
const Tick = ({ c }: { c: string }) => <svg width="10" height="10" viewBox="0 0 10 10"><path d="M1.500 5.200L4 8.200 8.300 1.200" fill="none" stroke={c} strokeWidth="2" /></svg>;
const Column = styled.div`flex: 1; display: flex; flex-direction: column; min-width: 0;`;
const Flex = styled.div`display: flex; flex: 1; min-height: 0;`;
const Splitter = styled.div`height: 6px; flex: none; display: flex; align-items: center; justify-content: center;`;

const browser: [string, string, boolean][] = [
  ['star', '즐겨찾기', false], ['sbm', '공간 북마크', true], ['phome', '프로젝트 홈', true], ['home', '홈', true],
  ['folder', 'C:₩', true], ['folder', 'D:₩ (DRIVERS)', true], ['box', 'GeoPackage', false], ['feather', 'SpatiaLite', false],
  ['pg', 'PostGIS', false], ['hana', 'SAP HANA', false], ['mssql', 'MSSQL', false], ['oracle', 'Oracle', false],
  ['earth', 'WMS/WMTS', false], ['vt', 'Vector Tiles', false], ['xyz', 'XYZ Tiles', true], ['wcs0', 'WCS', false], ['wfs0', 'WFS / OGC API - Features', false],
];

type L = { t: string; k: 'g' | 'p' | 'l'; d: number; on?: boolean; h?: number };
const layers: L[] = [
  { t: 'Morning', k: 'g', d: 1 }, ...['m4', 'm3', 'm2', 'm1'].map(t => ({ t, k: 'p' as const, d: 2, on: true })),
  { t: 'Afternoon', k: 'g', d: 1 }, ...['a5', 'a4', 'a3', 'a2', 'a1'].map(t => ({ t, k: 'p' as const, d: 2, on: true })),
  { t: 'AMPM', k: 'g', d: 0, on: true }, { t: 'morning', k: 'l', d: 1, on: true }, { t: 'afternoon', k: 'l', d: 1 },
  { t: 'JEJU50mGRID', k: 'l', d: 0, h: 20 }, { t: 'Kakao', k: 'g', d: 0, on: true },
];
const LayerRow = ({ r }: { r: L }) => {
  if (r.k === 'g')
    return <Row $l={9 + r.d * 25}><Tri /><HGap $w={12} /><Check>{r.on && <Tick c="#000" />}</Check><HGap $w={7} /><Icon n="grp" s={19} /><Cap $l={6}>{r.t}</Cap></Row>;
  if (r.k === 'p') {
    const cur = r.t === 'a1';
    return <Row $l={78} $sel={cur}><Check $dim><Tick c="#777" /></Check><HGap $w={6} /><Icon n={cur ? 'ptsB' : 'ptsG'} s={20} /><Cap $l={7} $i $b={cur} $u={cur} $c={cur ? '#000' : '#808080'}>{r.t}</Cap></Row>;
  }
  if (r.d === 0)
    return <Row $l={28} $h={20}><Check $dim /><HGap $w={6} /><Icon n="sq" s={19} /><Cap $l={6} $i $c="#808080">{r.t}</Cap></Row>;
  return <Row $l={53}><Check>{r.on && <Tick c="#000" />}</Check><HGap $w={6} /><Icon n={r.on ? 'cy' : 'mg'} s={20} /><Cap $l={6} $b={r.on} $i={!r.on} $c={r.on ? '#000' : '#808080'}>{r.t}</Cap></Row>;
};

/* icon, text, arrow, depth */
type ToolRow = [string, string, string, number];
const tools: ToolRow[] = [
  ['clock', '최근에 사용', '', 0], ...['네트워크 분석', '데이터베이스', '도표', '래스터 도구', '래스터 분석', '래스터 생성', '래스터 지형 분석', '레이어 도구', '메시', '벡터 도형', '벡터 분석', '벡터 생성', '벡터 선택', '벡터 일반', '벡터 중첩', '벡터 테이블', '벡터 파일', '보간'].map(t => ['q', t, '', 0] as ToolRow),
  ['lined', '라인 밀도 분석', '', 1], ['idw', '역거리 가중(IDW) 보간법', '', 1], ['kde', '열지도 (커널 밀도 추정)', '', 1], ['idw', 'TIN 보간', '', 1],
  ['q', '지도 제작', 'r', 0], ['q', '파일 도구', 'r', 0], ['q', 'GPS', 'r', 0], ['gdal', 'GDAL', 'r', 0], ['grass', 'GRASS', 'r', 0], ['ll', 'Lat Lon tools', 'd', 0],
  ['ecef', 'ECEF to Lat, Lon, Altitude', '', 1], ['ftp', 'Fields to point layer', '', 1], ['ecef', 'Lat, Lon, Altitude to ECEF', '', 1],
  ['mgrs', 'MGRS to point layer', '', 1], ['pluscode', 'Plus Codes to point layer', '', 1], ['ftp', 'Point layer to fields', '', 1],
];
const ArrowCell = styled.div`width: 12px; flex: none; display: flex; justify-content: center;`;

/* ---------- map ---------- */
const coast: [number, number][] = [[620, 60], [560, 95], [500, 112], [460, 122], [448, 168], [390, 190], [350, 215], [338, 265], [290, 318], [245, 350], [222, 388], [170, 418], [132, 462], [122, 500], [130, 550], [126, 615], [152, 662], [192, 705], [240, 735], [285, 762], [302, 797], [335, 825], [378, 848], [408, 838], [430, 798], [470, 770], [500, 750], [550, 755], [590, 768], [655, 750], [672, 733], [740, 757], [800, 760], [825, 782], [860, 768], [910, 770], [960, 748], [1050, 750], [1075, 738], [1115, 760], [1150, 748], [1190, 710], [1240, 672]];
const holes: [number, number, number, number][] = [[215, 525, 38, 38], [445, 350, 32, 54], [250, 440, 30, 36], [262, 395, 26, 18], [480, 508, 50, 18], [370, 560, 44, 14], [200, 585, 34, 20], [265, 650, 32, 20], [340, 640, 28, 20], [510, 665, 34, 26], [385, 770, 12, 34], [470, 230, 22, 16], [510, 590, 26, 10], [365, 430, 18, 18], [225, 680, 20, 16]];
const dots: { x: number; y: number; o: number }[] = (() => {
  let s = 20231;
  const rnd = () => ((s = (s * 1103515245 + 12345) & 0x7fffffff) / 0x7fffffff);
  const poly = [...coast, [1240, 560], [700, 560], [700, 60]] as [number, number][];
  const inside = (x: number, y: number) => {
    let c = false;
    for (let i = 0, j = poly.length - 1; i < poly.length; j = i++) {
      const [a, b] = poly[i], [d, e] = poly[j];
      if (b > y !== e > y && x < ((d - a) * (y - b)) / (e - b) + a) c = !c;
    }
    return c;
  };
  const out: { x: number; y: number; o: number }[] = [];
  for (let k = 0; k < 2900; k++) {
    const x = 110 + rnd() * 1130, y = 60 + rnd() * 730;
    if (!inside(x, y)) continue;
    if (x > 590 && y < 650) continue;
    if (x < 600 && holes.some(([a, b, c, d]) => ((x - a) / c) ** 2 + ((y - b) / d) ** 2 < 1)) continue;
    out.push({ x, y, o: 0.55 + rnd() * 0.45 });
  }
  coast.forEach(([x1, y1], i) => {
    if (!i) return;
    const [x0, y0] = coast[i - 1];
    const n = Math.ceil(Math.hypot(x1 - x0, y1 - y0) / 4);
    for (let k = 0; k < n; k++) {
      const t = rnd();
      out.push({ x: x0 + (x1 - x0) * t + (rnd() - 0.5) * 18, y: y0 + (y1 - y0) * t + (rnd() - 0.5) * 18, o: 0.850 + rnd() * 0.150 });
    }
  });
  return out;
})();
const MapBox = styled.div`width: 1147px; flex: none; border: 1px solid #b4b4b4; border-top: 0; overflow: hidden; margin-top: 1px;`;
const land = 'M' + coast.map(p => p.join(' ')).join('L') + 'L1240 560L700 560L700 60Z';
const MapView = () => (
  <MapBox>
    <svg width="1146" height="839" viewBox="342 160 1146 839" fontFamily="Noto Sans CJK KR" fontWeight="700" fontSize="12.500">
      <rect x="340" y="158" width="1150" height="842" fill="#9dc3d7" />
      <path d="M593 158L595 165 588 175 573 177 560 173 543 180 528 195 513 204 500 203 492 200 487 195 473 194V212L465 227 455 238 447 257 435 270 429 278V285L435 290 447 285H460L477 295 493 303 510 304 537 315 544 330 546 343 552 357 560 361 587 362 603 368 616 378 610 392 618 397 635 402 648 400 660 403 667 398 687 395 760 390V175H667L637 177 627 171 617 158Z" fill="#8fb6ce" />
      <path d="M341 590L352 597 372 606 400 607 410 598 428 584 440 580 458 583 468 598 474 615 486 628 494 645 500 660 507 680 515 703 513 717 535 737 536 777 550 795 563 810 580 827 597 829 640 830 657 830 670 820 682 798 723 796 730 773 733 769 773 772 820 767 870 765 927 766 937 740 965 740 980 722 1000 715 1014 700 1016 690 1040 684 1082 690 1110 670 1140 600 1490 600V1000H340Z" fill="#8fb6ce" />
      <path d="M340 950Q362 944 378 951T396 972Q400 985 392 1000H340Z" fill="#9dc3d7" />
      <g transform="translate(500 440) scale(.33333)">
        <path d="M620 -60L580 -40Q520 -55 470 -30 420 20 400 30 350 45 360 100 300 130 300 180 210 200 210 230 190 300 180 330 130 330 130 350 90 400 90 420 30 460 40 520 40 570 60 600 90 640 110 660 110 700 130 740 150 790 180 800 230 810 240 860 220 920 240 960 260 975 290 980 350 1000 380 990 440 970 420 920 490 920 540 890 620 900 700 830 780 870 860 850 900 870 940 850 980 810 1060 800L1150 800 1280 810 1400 700 1300 560 700 400Z" fill="#a4c9dd" />
        <path d="M560 30Q480 20 440 70 400 90 420 130 350 140 340 180 290 230 300 300 240 330 210 380 130 400 110 450 70 490 90 540 80 590 100 640 130 700 170 720 210 790 270 800 320 820 330 870 310 930 340 960 390 960 420 940 430 870 480 860 540 860 600 830L860 790 1280 770 1340 690 700 600Z" fill="#a9cee2" opacity=".7" />
        <g stroke="#b9bf9a" strokeWidth="4" strokeDasharray="22 12" fill="none">
          <path d="M350 850C325 960 330 1040 350 1095H395C410 1030 425 940 480 860L555 775M480 775H560M890 770V822L1150 775" />
        </g>
        <path d={land} fill="#efeee9" />
        <path d="M480 230L600 150V700L480 640 430 560 380 470 420 330Z" fill="#e0dec9" />
        <path d="M100 600Q190 580 250 610T380 670M300 480Q400 470 470 500T560 490M340 590Q400 570 470 580" stroke="#e3cfae" strokeWidth="5" fill="none" />
        <path d="M270 640Q340 600 400 580T560 560M430 520Q470 500 530 510" stroke="#333" strokeWidth="3" fill="none" />
        <g stroke="#17363a" strokeWidth="3" fill="#58f0f6">
          {dots.map((d, i) => <circle key={i} cx={d.x} cy={d.y} r="10.300" fillOpacity={d.o} />)}
        </g>
        <g fill="none" stroke="#333" strokeWidth="3"><path d="M356 932L370 917 386 930 371 946Z" /><circle cx="276" cy="284" r="9" /><ellipse cx="361" cy="1071" rx="5" ry="11" /></g>
        <path d="M84 542l10-6 12 4 10 8-6 10-12 2-10-6zM90 548l14 8M96 540l-4 16" fill="#6b7478" stroke="#333" strokeWidth="2.500" />
        <g fill="#444"><circle cx="469" cy="824" r="4" /><circle cx="925" cy="800" r="5" /><circle cx="1043" cy="781" r="6" /><circle cx="1118" cy="770" r="6" /><circle cx="1243" cy="786" r="5" /></g>
      </g>
      <g fill="#77706e">
        <text x="629" y="304">해암서</text><text x="603" y="801">마라도</text><text x="575" y="539" opacity=".85">비양도</text>
        <text x="780" y="704" opacity=".8">섶관섬</text>
      </g>
      <path d="M645 162L690 205M670 160L690 188" stroke="#d6dce0" strokeDasharray="5 3" fill="none" />
      <path d="M583 260V362M583 250H690" stroke="#9fc0d4" strokeDasharray="1 2" opacity=".6" />
      <path d="M676 160l5 3-3 4 7 2-4 6 6-2M682 171l5 5" stroke="#4e78ad" strokeWidth="1.500" fill="none" />
    </svg>
  </MapBox>
);

/* ---------- fields ---------- */
const dlgFont = css`font-family: "Liberation Sans", "Noto Sans CJK KR", sans-serif; font-size: 12px; letter-spacing: -0.500px;`;
const Field = styled.div<{ $w?: number; $h: number; $l?: number }>`
  ${dlgFont} ${p => (p.$w ? `width: ${p.$w}px;` : 'flex: 1;')} height: ${p => p.$h}px; flex-shrink: 0; background: #fff; border: 1px solid #a8a8a8; border-radius: 2px;
  display: flex; align-items: center; padding-left: ${p => p.$l || 5}px;
`;
const SpinCell = styled.div<{ $w?: number }>`
  width: ${p => p.$w || 14}px; height: 100%; flex: none; border-left: 1px solid #a8a8a8; display: flex; flex-direction: column; align-items: center; justify-content: center; gap: 4px;
  background: linear-gradient(#fff, #eee);
`;
const Spin = () => <SpinCell><Tri $d="u" /><Tri /></SpinCell>;
const Drop = ({ w }: { w?: number }) => <SpinCell $w={w}><Tri /></SpinCell>;
const ClearIcon = styled.svg`margin-right: 12px;`;
const Clear = () => (
  <ClearIcon width="17" height="12" viewBox="0 0 17 12"><path d="M5 0h12v12H5L0 6z" fill="#9a9a9a" /><path d="M7.500 3l6 6M13.500 3l-6 6" stroke="#fff" strokeWidth="1.600" /></ClearIcon>
);
const DText = styled.span<{ $i?: boolean; $b?: boolean; $w?: number }>`
  ${dlgFont} ${p => p.$i && 'font-style: italic;'} ${p => p.$b && 'font-weight: 700;'} ${p => p.$w && `width: ${p.$w}px; flex: none;`} white-space: nowrap;
`;
const Btn = styled.div<{ $w?: number; $h?: number; $p?: boolean; $ml?: number }>`
  ${dlgFont} width: ${p => p.$w || 80}px; height: ${p => p.$h || 20}px; margin-left: ${p => p.$ml || 0}px; flex: none; border: 1px solid ${p => (p.$p ? '#3ba7f5' : '#a8a8a8')}; border-radius: 2px;
  background: ${p => (p.$p ? 'linear-gradient(#fff, #e4edf5)' : 'linear-gradient(#fff, #eee)')};
  display: flex; align-items: center; justify-content: center;
`;
const Combo = styled(Btn)`justify-content: space-between; padding: 0 9px 0 5px;`;
const StyleBtn = styled(Btn)`padding-left: 10px; gap: 17px;`;

/* ---------- dialog ---------- */
const Dialog = styled.div`
  position: absolute; left: 687px; top: 133px; width: 826px; height: 533px; border-radius: 8px; overflow: hidden;
  background: #efefef; border: 1px solid #9a9a9a; border-left: 0; display: flex; flex-direction: column;
`;
const DialogShade = styled.div`
  position: absolute; left: 687px; top: 133px; width: 825px; height: 532px; border-radius: 8px; box-shadow: 0 14px 46px 2px rgba(0, 0, 0, 0.500);
`;
const DTitle = styled.div`height: 30px; flex: none; background: #fff; display: flex; align-items: center; gap: 5px; padding-left: 8px;`;
const DBody = styled.div`flex: 1; display: flex; min-height: 0;`;
const DSide = styled.div`width: 156px; flex: none; background: #5d5d5d; display: flex; flex-direction: column;`;
const DSearch = styled.div`height: 26px; flex: none; background: #fff; border: 1px solid #aaa; border-radius: 3px; display: flex; align-items: center; padding-left: 9px;`;
const DList = styled.div`height: 468px; margin-top: 7px; flex: none; display: flex;`;
const DItem = styled.div<{ $on?: boolean }>`
  height: 36px; display: flex; align-items: center; padding-left: ${p => (p.$on ? 7 : 5)}px; gap: ${p => (p.$on ? 10 : 8)}px;
  background: ${p => (p.$on ? '#f0f0f0' : 'transparent')}; color: ${p => (p.$on ? '#000' : '#f0f0f0')};
`;
const DMain = styled.div`flex: 1; display: flex; flex-direction: column; padding: 36px 3px 3px 5px;`;
const FRow = styled.div<{ $h: number; $mt?: number; $g?: number }>`height: ${p => p.$h}px; margin-top: ${p => p.$mt || 0}px; gap: ${p => p.$g || 0}px; flex: none; display: flex; align-items: center;`;
const Ramp = styled.div`
  flex: 1; height: 24px; border: 1px solid #a8a8a8; border-radius: 2px; padding: 1px 3px 1px 4px; margin-right: 1px; display: flex;
`;
const RampFill = styled.div`
  flex: 1;
  background: linear-gradient(90deg, rgba(255,255,190,0) 0%, rgba(255,236,150,.6) 12%, #fed470 22%, #fdb04c 40%, #fd8239 58%, #f54327 76%, #d81820 90%, #bd0026 100%),
    repeating-conic-gradient(#8f8f8f 0 25%, #fff 0 50%) 0 0 / 6px 6px;
`;
const Slider = styled.div`flex: 1; display: flex; flex-direction: column; margin: 0 9px 0 8px;`;
const Track = styled.div`height: 12px; display: flex; align-items: center;`;
const Fill = styled.div`width: 256px; height: 5px; background: #1a86e4; border: 1px solid #0a60ad;`;
const Handle = styled.div`width: 13px; height: 12px; border: 1px solid #a0a0a0; border-radius: 2px; background: #fff;`;
const Rest = styled.div`flex: 1; height: 5px; background: #d8d8d8; border: 1px solid #b5b5b5; border-left: 0; border-radius: 0 2px 2px 0;`;
const Marks = styled.div`display: flex; justify-content: space-between; padding: 3px 6px 0 6px; i { width: 1px; height: 4px; background: #999; }`;

const side: [string, string][] = [['info', '정보'], ['src', '원본'], ['sym', '심볼'], ['lab', '라벨'], ['mask', '마스크'], ['cube', '3D 뷰'], ['diag', '도표'], ['field', '필드'], ['attr', '속성 양식'], ['join', '결합'], ['aux', '보조 저장소'], ['act', '액션'], ['disp', '디스플레이']];

const LayerDialog = () => (
  <>
    <DialogShade />
    <Dialog>
      <DTitle><Icon n="q" s={16} /><Txt t="레이어 속성 — a1 — 심볼" /></DTitle>
      <DBody>
        <DSide>
          <DSearch><Icon n="mag" s={16} /></DSearch>
          <DList>
            <Rows>{side.map(([n, t], i) => <DItem key={n} $on={i === 2}><Icon n={n} s={24} /><Txt t={t} /></DItem>)}</Rows>
            <VScroll a={0} t={274} />
          </DList>
        </DSide>
        <DMain>
          <FRow $h={24}><DText $w={71}><Ko>색상표</Ko></DText><Ramp><RampFill /></Ramp><Btn $w={12} $h={24}><Tri /></Btn></FRow>
          <FRow $h={23} $mt={7}>
            <DText $w={71}><Ko>반경</Ko></DText>
            <Field $h={22}><span>18,000000</span><Grow /><Clear /><Spin /></Field>
            <Combo $w={142} $h={23} $ml={7}><Ko>포인트</Ko><Tri $s={5} /></Combo>
          </FRow>
          <FRow $h={24} $mt={9}><DText $w={71}><Ko>최대값</Ko></DText><Field $h={24}><span>500,000000</span><Grow /><Clear /><Spin /></Field></FRow>
          <FRow $h={28} $mt={8}>
            <DText $w={71}><Txt t="가중치 부여" /></DText><Field $h={28}><Grow /><Drop w={20} /></Field>
            <Btn $w={28} $h={28} $ml={7}><Icon n="eps1" s={22} /></Btn>
          </FRow>
          <FRow $h={24} $mt={3}>
            <DText $w={71}><Txt t="렌더링 품질" /></DText><DText $i><Ko>최상</Ko></DText>
            <Slider><Track><Fill /><Handle /><Rest /></Track><Marks><i /><i /><i /><i /><i /></Marks></Slider>
            <DText $i><Ko>최속</Ko></DText>
          </FRow>
          <Grow />
          <FRow $h={20}><HGap $w={6} /><Tri $d="r" $s={6} /><HGap $w={11} /><DText $b><Txt t="레이어 렌더링" /></DText></FRow>
          <FRow $h={20} $mt={11} $g={7}>
            <StyleBtn><Ko>스타일</Ko><Tri $s={3} /></StyleBtn><Grow />
            <Btn $p><Ko>확인</Ko></Btn><Btn><Ko>취소</Ko></Btn><Btn><Ko>적용</Ko></Btn><Btn><Ko>도움말</Ko></Btn>
          </FRow>
        </DMain>
      </DBody>
    </Dialog>
  </>
);

const Popup = styled.div`
  position: absolute; left: 848px; top: 13px; width: 661px; height: 198px; background: #f0f0f0; border: 1px solid #8a8a8a;
  box-shadow: 2px 2px 3px rgba(0, 0, 0, 0.500);
`;
const Opt = styled.div<{ $on?: boolean; $l?: number }>`
  height: 22px; display: flex; align-items: center; padding-left: ${p => p.$l || 12}px; gap: 11px; border: solid transparent; border-width: 1px 0;
  ${p => p.$on && css`background: #0078d7; border-color: #2a9cf5; color: #fff;`}
`;
const opts: [string, string][] = [['sNone', '심볼 없음'], ['sOne', '단일 심볼'], ['sCat', '분류값 사용'], ['sGrad', '단계 구분'], ['sRule', '규칙 기반'], ['sDisp', '포인트 변위'], ['sClus', '포인트 클러스터'], ['sHeat', '열지도']];

const Status = styled.footer`height: 32px; flex: none; display: flex; align-items: center; padding: 0 7px 0 4px;`;
const Locator = styled.div<{ $w: number; $l: number }>`width: ${p => p.$w}px; height: 26px; flex: none; background: #fff; border: 1px solid #a8a8a8; border-radius: 3px; display: flex; align-items: center; padding-left: ${p => p.$l}px; gap: 8px; color: #777;`;
const ShortSep = styled(Sep)`height: 11px;`;
const BugSlot = styled(Slot)`padding-right: 9px;`;
const menus = ['프로젝트 (J)', '편집 (E)', '보기 (V)', '레이어 (L)', '설정 (S)', '플러그인 (P)', '벡터 (O)', '래스터 (R)', '데이터베이스 (D)', '웹 (W)', '메시 (M)', 'MMQGIS', '공간 처리 (C)'];
const Und = styled.u`text-underline-offset: 2px;`;

export default function App() {
  return (
    <Shell>
      <Global />
      <TitleBar>
        <Icon n="q" s={16} /><Txt t="*jeju — QGIS" />
        <WinButtons>
          <svg width="11" height="11"><path d="M0 5.500h10" stroke="#888" /></svg>
          <svg width="11" height="11" fill="none" stroke="#888"><rect x=".5" y="2.500" width="7.500" height="7.500" rx="1.500" /><path d="M3 .5h5.500a2 2 0 0 1 2 2V8" /></svg>
          <svg width="11" height="11" stroke="#888"><path d="M.5.5l10 10M10.500.5l-10 10" /></svg>
        </WinButtons>
      </TitleBar>
      <MenuBar>
        {menus.map(m => {
          const r = /^(.*)\((.)\)$/.exec(m);
          return <span key={m}>{r ? <><Txt t={r[1] + '('} /><Und>{r[2]}</Und>)</> : m}</span>;
        })}
      </MenuBar>
      <Toolbar h={39} items={tb1} />
      <Toolbar h={39} items={tb2} />
      <Toolbar h={38} items={tb3} />
      <Main>
        <SideBar>
          <SideGrip><Dots as="div" $h /></SideGrip>
          {['vadd', 'raster', 'meshadd', 'comma', 'spadd', 'virtadd', 'pgadd', 'wms', 'wcs', 'wfs', 'shp'].map((n, i) => (
            <SideTool key={n}><Icon n={n} s={24} />{(i === 6 || i === 10) && <Tri />}</SideTool>
          ))}
        </SideBar>
        <Dock $w={282}>
          <DockTitle $r={2}><Txt t="탐색기" /><Grow /><WBtn /><WBtn x /></DockTitle>
          <DockBar $g={9} $l={8}>{['addrect', 'refresh', 'filter', 'up', 'info'].map(n => <Icon key={n} n={n} s={16} />)}</DockBar>
          <Box $h={367}>
            <Rows>
              {browser.map(([n, t, a]) => <Row key={t} $l={2}><ArrowCell>{a && <Tri $d="r" $s={4} />}</ArrowCell><HGap $w={5} /><Icon n={n} s={20} /><Cap $l={6} $low={latin(t)}><Txt t={t} /></Cap></Row>)}
            </Rows>
            <VScroll a={0} t={284} />
          </Box>
          <Splitter><Dots as="div" $h /></Splitter>
          <DockTitle $r={2}><Txt t="레이어" /><Grow /><WBtn /><WBtn x /></DockTitle>
          <DockBar $g={9} $l={8}>
            {['lsty', 'grpadd', 'eye', 'filt2', 'eps'].map(n => <Icon key={n} n={n} s={16} />)}<Tri $s={3.500} /><Icon n="down" s={15} /><Icon n="up" s={15} /><Icon n="remrect" s={16} />
          </DockBar>
          <Box $h={366}>
            <Column>
              <Flex><Rows $pt={1}>{layers.map(r => <LayerRow key={r.t} r={r} />)}</Rows></Flex>
              <HScroll><Knob><Tri $d="l" /></Knob><HThumb /><Grow /><RightKnob><Tri $d="r" /></RightKnob></HScroll>
            </Column>
            <Dock $w={14}>
              <Flex><VScroll a={56} t={184} /></Flex>
              <Corner />
            </Dock>
          </Box>
        </Dock>
        <Slot $w={7}><Dots /></Slot>
        <MapView />
        <Slot $w={6} />
        <Dock $w={426}>
          <DockTitle $r={3}><Txt t="공간 처리 툴박스" /><Grow /><WBtn /><WBtn x /></DockTitle>
          <DockBar $g={9} $l={9}>
            <Icon n="gear" s={16} /><Icon n="py" s={16} /><Icon n="clock" s={16} /><Icon n="doc" s={16} /><ShortSep /><Icon n="note" s={15} /><ShortSep /><Icon n="wrench" s={16} />
          </DockBar>
          <Locator $w={426} $l={11}><Icon n="mag" s={15} /><Txt t="검색…" /></Locator>
          <Box $h={764}>
            <Rows>
              {tools.map(([n, t, a, d], i) => (
                <Row key={i} $l={6 + d * 25} $sel={i === 21}><ArrowCell>{a === 'r' ? <Tri $d="r" /> : a === 'd' ? <Tri /> : null}</ArrowCell><HGap $w={11} /><Icon n={n} s={n === 'q' ? 18 : 20} /><Cap $l={n === 'q' ? 7 : 5} $low={latin(t)}><Txt t={t} /></Cap></Row>
              ))}
            </Rows>
            <VScroll a={0} t={658} />
          </Box>
        </Dock>
      </Main>
      <Status>
        <Locator $w={436} $l={9}><Icon n="mag" s={16} /><Txt t="위치를 찾으려면 입력하세요 (Ctrl+K)" /></Locator>
        <Grow />
        <DText $w={26}><Ko>좌표</Ko></DText><Field $w={85} $h={26} $l={6}>107522,12655</Field>
        <BugSlot $w={36}><Icon n="bug" s={20} /></BugSlot>
        <DText $w={26}><Ko>축척</Ko></DText><Field $w={102} $h={23} $l={4}>1:464492<Grow /><Drop w={20} /></Field>
        <Slot $w={37}><Icon n="lock" s={20} /></Slot>
        <DText $w={36}><Ko>확대경</Ko></DText><Field $w={99} $h={24} $l={4}>100%<Grow /><Spin /></Field>
        <Slot $w={9} /><DText $w={31}><Ko>회전</Ko></DText><Field $w={95} $h={24} $l={4}>0,0 °<Grow /><Spin /></Field>
        <Slot $w={6} /><Check><Tick c="#000" /></Check><Slot $w={5} /><DText $w={47}><Ko>렌더링</Ko></DText>
        <Icon n="ggrey" s={19} /><Slot $w={3} /><DText $w={83}>EPSG:5181</DText><Icon n="bubble" s={20} />
      </Status>
      <LayerDialog />
      <Popup>
        {opts.map(([n, t], i) => <Opt key={n} $on={i === 6}><Icon n={n} s={18} /><Txt t={t} /></Opt>)}
        <Opt $l={8}><Txt t="내장 심볼" /></Opt>
      </Popup>
    </Shell>
  );
}
